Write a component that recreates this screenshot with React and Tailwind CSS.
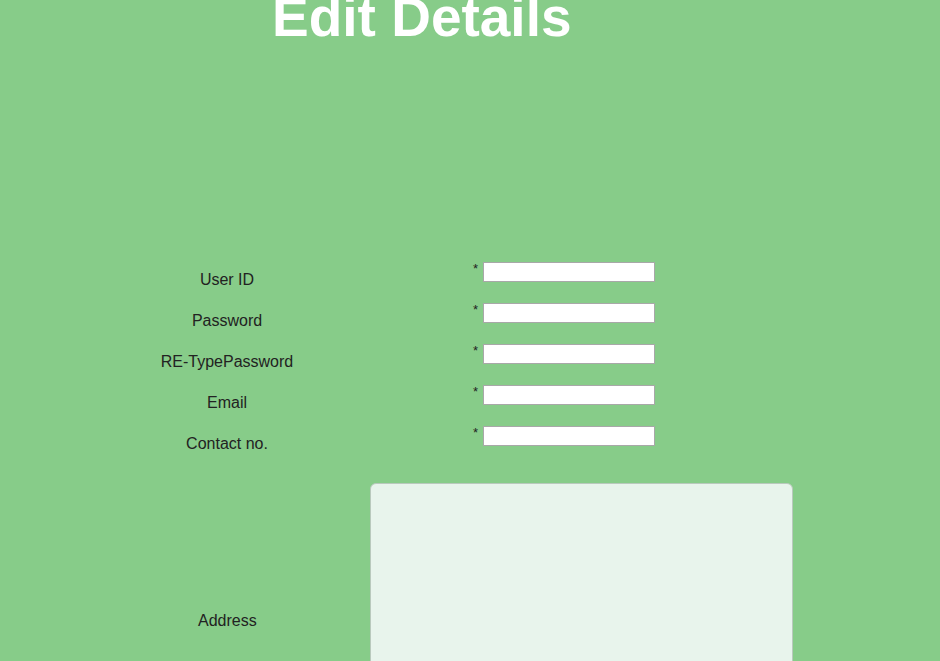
import React from 'react';

const fields = ['User ID', 'Password', 'RE-TypePassword', 'Email', 'Contact no.'];

const App = () => {
  return (
    <div className="w-[940px] h-[661px] overflow-hidden bg-[#87cc89]" style={{ fontFamily: '"Liberation Sans", Arial, sans-serif' }}>
      <h1 className="-mt-[10px] pl-[272px] text-[55px] leading-none font-bold text-white">Edit Details</h1>

      <form className="mt-[214px]">
        {fields.map((f) => (
          <div key={f} className="flex h-[41px] items-start">
            <label className="w-[454px] mt-[12px] text-center text-[16px] leading-[18px] text-[#222]">{f}</label>
            <div className="flex items-start mt-[3px] ml-[19px]">
              <span className="w-[10px] mt-0 text-[13px] leading-none text-[#222]">*</span>
              <input type="text" className="w-[172px] h-[20px] bg-white border border-[#a8a8a8] outline-none" />
            </div>
          </div>
        ))}

        <div className="flex items-start mt-[19px]">
          <label className="w-[370px] pl-[198px] mt-[129px] text-[16px] leading-[18px] text-[#222]">Address</label>
          <textarea className="w-[423px] h-[220px] bg-[#e8f4ec] border border-[#b9c9bd] rounded-md resize-none outline-none" />
        </div>
      </form>
    </div>
  );
};

export default App;
